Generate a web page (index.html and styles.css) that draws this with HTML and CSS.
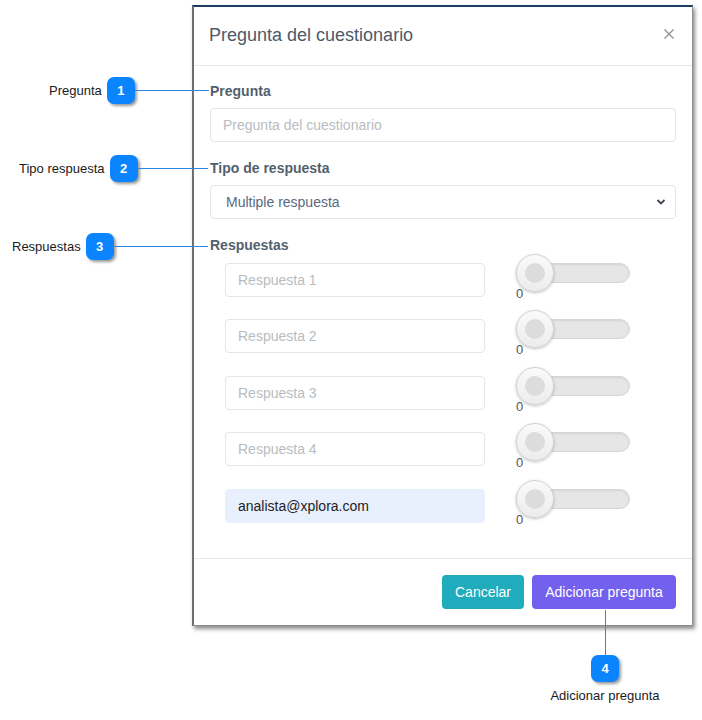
FILE: index.html
```html
<!DOCTYPE html>
<html lang="es">
<head>
<meta charset="utf-8">
<title>Pregunta del cuestionario</title>
<link rel="stylesheet" href="styles.css">
</head>
<body>
<div class="page">
  <div class="modal">
    <div class="modal-header">
      <h1 class="modal-title">Pregunta del cuestionario</h1>
      <svg class="close" width="12" height="12" viewBox="0 0 12 12"><path d="M1.5 1.5 L10.5 10.5 M10.5 1.5 L1.5 10.5" stroke="#8a8f96" stroke-width="1.3" fill="none"/></svg>
    </div>
    <div class="modal-body">
      <div class="group">
        <div class="label">Pregunta</div>
        <div class="input placeholder">Pregunta del cuestionario</div>
      </div>
      <div class="group">
        <div class="label">Tipo de respuesta</div>
        <div class="input select">
          <span>Multiple respuesta</span>
          <svg width="10" height="8" viewBox="0 0 10 8"><path d="M1.5 2 L5 5.5 L8.5 2" stroke="#3f4650" stroke-width="1.8" fill="none"/></svg>
        </div>
      </div>
      <div class="label label-resp">Respuestas</div>
      <div class="rows">
        <div class="row"><div class="input answer placeholder">Respuesta 1</div><div class="toggle"><span class="knob"></span><span class="val">0</span></div></div>
        <div class="row"><div class="input answer placeholder">Respuesta 2</div><div class="toggle"><span class="knob"></span><span class="val">0</span></div></div>
        <div class="row"><div class="input answer placeholder">Respuesta 3</div><div class="toggle"><span class="knob"></span><span class="val">0</span></div></div>
        <div class="row"><div class="input answer placeholder">Respuesta 4</div><div class="toggle"><span class="knob"></span><span class="val">0</span></div></div>
        <div class="row"><div class="input answer filled">analista@xplora.com</div><div class="toggle"><span class="knob"></span><span class="val">0</span></div></div>
      </div>
    </div>
    <div class="modal-footer">
      <button class="btn btn-cancel">Cancelar</button>
      <button class="btn btn-add">Adicionar pregunta</button>
    </div>
  </div>

  <div class="callout c1"><span class="ctext">Pregunta</span><span class="badge">1</span><span class="hline"></span></div>
  <div class="callout c2"><span class="ctext">Tipo respuesta</span><span class="badge">2</span><span class="hline"></span></div>
  <div class="callout c3"><span class="ctext">Respuestas</span><span class="badge">3</span><span class="hline"></span></div>
  <div class="callout4">
    <span class="vline"></span>
    <span class="badge">4</span>
    <span class="ctext">Adicionar pregunta</span>
  </div>
</div>
</body>
</html>
```
FILE: styles.css
```css
* { box-sizing: border-box; }
html, body { margin: 0; padding: 0; background: #fff; }
body { font-family: "Liberation Sans", Arial, sans-serif; }
.page { position: relative; width: 702px; height: 720px; overflow: hidden; padding-top: 5px; }

.modal {
  margin-left: 192px;
  width: 501px;
  background: #fff;
  border-top: 2px solid #1e3c62;
  border-left: 2px solid #6b6e72;
  border-right: 1px solid #8a8d91;
  border-bottom: 1px solid #8a8d91;
  box-shadow: 2px 3px 4px rgba(0,0,0,0.45);
}
.modal-header {
  height: 59px;
  border-bottom: 1px solid #e6e9ec;
  display: flex;
  align-items: center;
  justify-content: space-between;
  padding: 0 16px 1px 15px;
}
.modal-title { margin: 0; font-size: 18px; font-weight: normal; color: #4c5a6b; }
.close { margin-top: -4px; margin-right: 1px; }

.modal-body { padding: 15px 16px 35px 16px; }
.group { margin-bottom: 16px; }
.label { font-size: 14px; font-weight: bold; color: #535f6d; line-height: 20px; margin-bottom: 7px; }
.label-resp { margin-bottom: 8px; }

.input {
  height: 34px;
  border: 1px solid #e3e6ea;
  border-radius: 4px;
  font-size: 14px;
  display: flex;
  align-items: center;
  padding: 0 12px;
  background: #fff;
}
.placeholder { color: #b9bcc1; }
.select { justify-content: space-between; color: #5a6a7d; padding: 0 9px 0 15px; }
.rows { display: flex; flex-direction: column; gap: 22.4px; padding-left: 15px; }
.row { display: flex; align-items: flex-start; height: 34px; }
.answer { width: 260px; }
.filled { background: #e8f0fe; border-color: #e8f0fe; color: #222; }

.toggle {
  position: relative;
  margin-left: 31px;
  width: 114px;
  height: 20px;
  border-radius: 10px;
  background: #e6e6e6;
  border: 1px solid #d6d6d6;
  box-shadow: inset 0 1px 2px rgba(0,0,0,0.08);
}
.knob {
  position: absolute;
  left: -1px;
  top: -10px;
  width: 38px;
  height: 38px;
  border-radius: 50%;
  background: linear-gradient(#fafafa, #ececec);
  border: 1px solid #d3d3d3;
  box-shadow: 0 1px 3px rgba(0,0,0,0.25);
}
.knob::after {
  content: "";
  position: absolute;
  left: 8px;
  top: 8px;
  width: 20px;
  height: 20px;
  border-radius: 50%;
  background: #dcdcdc;
}
.val {
  position: absolute;
  left: -1px;
  top: 23px;
  font-size: 13px;
  line-height: 13px;
  color: #555;
}

.modal-footer {
  border-top: 1px solid #e6e9ec;
  padding: 16px 16px 16px 16px;
  display: flex;
  justify-content: flex-end;
  gap: 8px;
}
.btn {
  height: 34px;
  border: none;
  border-radius: 4px;
  font-family: "Liberation Sans", Arial, sans-serif;
  font-size: 14px;
  color: #fff;
  padding: 0 13px;
}
.btn-cancel { background: #20acbd; width: 82px; }
.btn-add { background: #7460ee; width: 144px; }

/* callouts */
.callout { position: absolute; display: flex; align-items: center; height: 27px; }
.ctext { font-size: 13px; color: #1a1a1a; }
.badge {
  width: 28px;
  height: 27px;
  border-radius: 7px;
  background: #0a84ff;
  color: #fff;
  font-size: 13px;
  font-weight: bold;
  display: flex;
  align-items: center;
  justify-content: center;
  box-shadow: 2px 2px 3px rgba(0,0,0,0.4);
  flex: none;
}
.callout .badge { margin-left: 5px; }
.hline { height: 1px; background: #2f86e0; }
.c1 { left: 49px; top: 77px; }
.c1 .hline { width: 74px; }
.c2 { left: 19px; top: 155px; }
.c2 .hline { width: 70px; }
.c3 { left: 12px; top: 233px; }
.c3 .hline { width: 94px; }

.callout4 {
  position: absolute;
  left: 545px;
  top: 610px;
  width: 120px;
  display: flex;
  flex-direction: column;
  align-items: center;
}
.vline { width: 1px; height: 45px; background: #2f86e0; }
.callout4 .ctext { margin-top: 6px; white-space: nowrap; }
```
